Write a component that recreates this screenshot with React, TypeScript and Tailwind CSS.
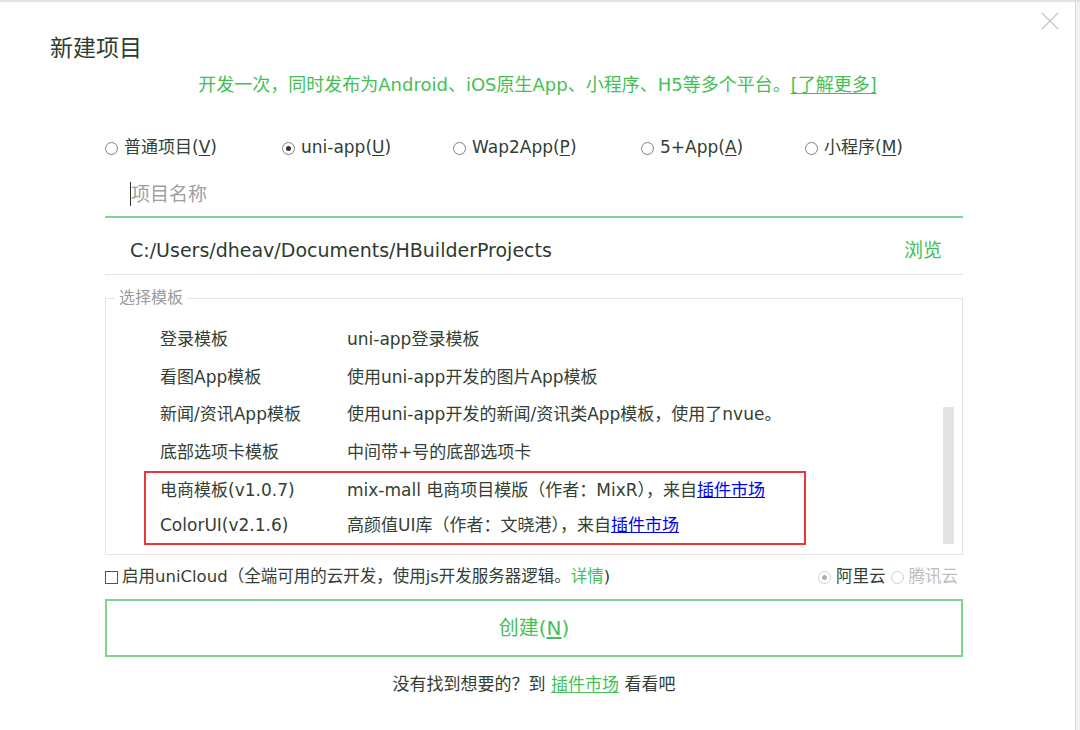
import { X } from "lucide-react";

const radios = [
  { label: "普通项目", key: "V", checked: false },
  { label: "uni-app", key: "U", checked: true },
  { label: "Wap2App", key: "P", checked: false },
  { label: "5+App", key: "A", checked: false },
  { label: "小程序", key: "M", checked: false },
];

const templates = [
  { name: "登录模板", desc: "uni-app登录模板" },
  { name: "看图App模板", desc: "使用uni-app开发的图片App模板" },
  { name: "新闻/资讯App模板", desc: "使用uni-app开发的新闻/资讯类App模板，使用了nvue。" },
  { name: "底部选项卡模板", desc: "中间带+号的底部选项卡" },
];

function Radio({ checked, disabled }: { checked?: boolean; disabled?: boolean }) {
  return (
    <span
      className={`inline-flex items-center justify-center w-[13px] h-[13px] rounded-full border ${
        disabled ? "border-[#cfcfcf]" : "border-[#808080]"
      } bg-white`}
    >
      {checked && <span className={`w-[5px] h-[5px] rounded-full ${disabled ? "bg-[#b0b0b0]" : "bg-[#333]"}`} />}
    </span>
  );
}

export default function App() {
  return (
    <div className="w-[1080px] h-[730px] bg-white flex border-t-2 border-[#e2e2e2] [font-family:'DejaVu_Sans','Noto_Sans_CJK_SC',sans-serif] text-[#334033] overflow-hidden">
      <div className="relative w-[1076px] border-r border-[#d8d8d8] flex flex-col">
        {/* close */}
        <X className="absolute top-[3px] right-[9px] w-[32px] h-[32px] text-[#c4c4c4]" strokeWidth={0.8} />

        {/* Title */}
        <div className="mt-[31px] pl-[50px] h-[30px] leading-[30px] text-[23px] text-[#2f3d2f]">新建项目</div>

        {/* Subtitle */}
        <div className="mt-[8px] h-[28px] leading-[28px] text-center text-[18px] text-[#45bf55]">
          开发一次，同时发布为Android、iOS原生App、小程序、H5等多个平台。
          <span className="underline underline-offset-2">[了解更多]</span>
        </div>

        <div className="mx-[105px] w-[858px] flex flex-col">
          {/* Project type radios */}
          <div className="mt-[37px] h-[24px] flex items-center text-[17px]">
            {radios.map((r, i) => (
              <div
                key={r.key}
                className={`flex items-center gap-[6px] ${
                  i === 0 ? "w-[177px]" : i === 1 ? "w-[171px]" : i === 2 ? "w-[188px]" : i === 3 ? "w-[164px]" : ""
                }`}
              >
                <Radio checked={r.checked} />
                <span>
                  {r.label}(<span className="underline underline-offset-2">{r.key}</span>)
                </span>
              </div>
            ))}
          </div>

          {/* Project name input */}
          <div className="mt-[8px] h-[50px] pt-[4px] border-b-2 border-[#7fd68b] flex items-center pl-[25px]">
            <span className="w-[1px] h-[24px] bg-[#333]" />
            <span className="text-[19px] text-[#a0a0a0]">项目名称</span>
          </div>

          {/* Path */}
          <div className="h-[57px] pt-[8px] border-b border-[#e3e3e3] flex items-center justify-between pl-[25px] pr-[21px]">
            <span className="text-[19px] text-[#2f3a2f]">C:/Users/dheav/Documents/HBuilderProjects</span>
            <span className="text-[19px] text-[#45bf55]">浏览</span>
          </div>

          {/* Template fieldset */}
          <fieldset className="relative mt-[12px] border border-[#e3e3e3] pb-[9px]">
            <legend className="ml-[9px] px-[4px] text-[16px] leading-[22px] text-[#9a9a9a]">选择模板</legend>
            <div className="pt-[12px] flex flex-col text-[17px]">
              {templates.map((t) => (
                <div key={t.name} className="h-[37.5px] flex items-center pl-[54px]">
                  <span className="w-[187px]">{t.name}</span>
                  <span>{t.desc}</span>
                </div>
              ))}
              <div className="ml-[38px] w-[662px] border-2 border-[#e8383d] flex flex-col">
                <div className="h-[35px] flex items-center pl-[14px]">
                  <span className="w-[187px]">电商模板(v1.0.7)</span>
                  <span>
                    mix-mall 电商项目模版（作者：MixR），来自
                    <span className="text-[#0000ee] underline">插件市场</span>
                  </span>
                </div>
                <div className="h-[35px] flex items-center pl-[14px]">
                  <span className="w-[187px]">ColorUI(v2.1.6)</span>
                  <span>
                    高颜值UI库（作者：文晓港），来自
                    <span className="text-[#0000ee] underline">插件市场</span>
                  </span>
                </div>
              </div>
            </div>
            {/* scrollbar */}
            <div className="absolute right-[8px] top-[98px] w-[11px] h-[137px] bg-[#e4e4e4]" />
          </fieldset>

          {/* uniCloud */}
          <div className="mt-[10px] h-[24px] flex items-center justify-between text-[16.5px]">
            <div className="flex items-center gap-[4px]">
              <span className="w-[13px] h-[13px] border border-[#555] bg-white" />
              <span>
                启用uniCloud（全端可用的云开发，使用js开发服务器逻辑。
                <span className="text-[#45bf55]">详情</span>)
              </span>
            </div>
            <div className="flex items-center gap-[5px] pr-[5px]">
              <Radio checked disabled />
              <span>阿里云</span>
              <Radio disabled />
              <span className="text-[#bdbdbd]">腾讯云</span>
            </div>
          </div>

          {/* Create button */}
          <button className="mt-[10px] h-[58px] border-2 border-[#7fd68b] bg-white text-[20px] text-[#45bf55] flex items-center justify-center">
            创建(<span className="underline underline-offset-2">N</span>)
          </button>

          {/* Footer */}
          <div className="mt-[15px] h-[24px] text-center text-[17px] text-[#333d33]">
            没有找到想要的？到 <span className="text-[#45bf55] underline underline-offset-2">插件市场</span> 看看吧
          </div>
        </div>
      </div>
      <div className="flex-1 bg-[#f2f2f2]" />
    </div>
  );
}
